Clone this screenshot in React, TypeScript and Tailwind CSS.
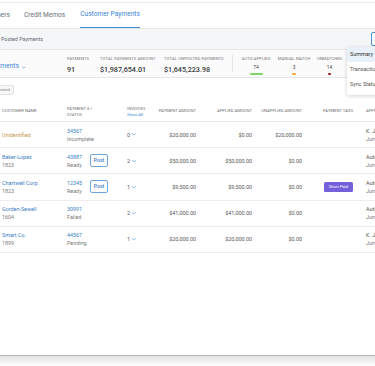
import React from "react";

const Chevron = ({ className = "" }: { className?: string }) => (
  <svg viewBox="0 0 10 6" className={className} fill="none" stroke="currentColor" strokeWidth="1.4" strokeLinecap="round" strokeLinejoin="round">
    <path d="M1 1l4 4 4-4" />
  </svg>
);

type Row = {
  name: string;
  id?: string;
  nameColor: string;
  pay: string;
  status: string;
  post: boolean;
  inv: string;
  amt: string;
  applied: string;
  unapplied: string;
  tag?: string;
  app1: string;
};

const rows: Row[] = [
  { name: "Unidentified", nameColor: "text-[#c9944e]", pay: "34567", status: "Incomplete", post: false, inv: "0", amt: "$20,000.00", applied: "$0.00", unapplied: "$20,000.00", app1: "K. Jo" },
  { name: "Baker-Lopez", id: "1823", nameColor: "text-[#3b7dc4]", pay: "43887", status: "Ready", post: true, inv: "2", amt: "$50,000.00", applied: "$50,000.00", unapplied: "$0.00", app1: "Auto" },
  { name: "Chartwell Corp.", id: "1823", nameColor: "text-[#3b7dc4]", pay: "12345", status: "Ready", post: true, inv: "1", amt: "$9,500.00", applied: "$9,500.00", unapplied: "$0.00", tag: "Short Paid", app1: "Auto" },
  { name: "Gorden-Sewell", id: "1604", nameColor: "text-[#3b7dc4]", pay: "30991", status: "Failed", post: false, inv: "2", amt: "$41,000.00", applied: "$41,000.00", unapplied: "$0.00", app1: "Auto" },
  { name: "Smart Co.", id: "1899", nameColor: "text-[#3b7dc4]", pay: "44567", status: "Pending", post: false, inv: "1", amt: "$20,000.00", applied: "$20,000.00", unapplied: "$0.00", app1: "K. Jo" },
];

export default function App() {
  return (
    <div className="relative w-[375px] h-[366px] overflow-hidden bg-white font-['Roboto',sans-serif] flex flex-col">
      {/* top line */}
      <div className="h-[3px] border-b border-[#ececec] shrink-0" />
      {/* tabs */}
      <div className="h-[26px] shrink-0 border-b border-[#e6e8eb] flex items-stretch text-[6.6px] text-[#6b6f75]">
        <div className="w-[10px] shrink-0 overflow-hidden flex justify-end items-center whitespace-nowrap">
          <span className="shrink-0">Customers</span>
        </div>
        <div className="ml-[14px] shrink-0 flex items-center whitespace-nowrap">Credit Memos</div>
        <div className="ml-[15px] shrink-0 flex flex-col justify-end whitespace-nowrap">
          <div className="flex-1 flex items-center text-[#3d86d6]">Customer Payments</div>
          <div className="h-[1.5px] bg-[#3d86d6]" />
        </div>
      </div>
      {/* sub band */}
      <div className="h-[20px] shrink-0 bg-[#f5f6f8] flex items-center justify-between">
        <span className="pl-[1px] text-[5.4px] text-[#666a70] whitespace-nowrap">Posted Payments</span>
        <div className="w-[14px] h-[14px] shrink-0 -mr-[10px] rounded-[2px] border border-[#4a90d9] bg-white" />
      </div>
      {/* stats band */}
      <div className="h-[29px] shrink-0 bg-[#fbfbfc] border-y border-[#e6e8eb] flex items-stretch">
        <div className="w-[67px] shrink-0 flex items-end pb-[6px]">
          <span className="text-[6.8px] text-[#3d86d6] whitespace-nowrap">ments</span>
          <Chevron className="w-[4px] h-[3px] ml-[3px] mb-[2px] text-[#3d86d6]" />
        </div>
        <div className="w-[33px] shrink-0 flex flex-col pt-[6px]">
          <span className="text-[4.2px] text-[#777] tracking-[0.1px] whitespace-nowrap">PAYMENTS</span>
          <span className="mt-[3px] text-[7.2px] font-medium text-[#3a3a3a]">91</span>
        </div>
        <div className="w-[64px] shrink-0 flex flex-col pt-[6px]">
          <span className="text-[4.2px] text-[#777] tracking-[0.1px] whitespace-nowrap">TOTAL PAYMENTS AMOUNT</span>
          <span className="mt-[3px] text-[7.2px] font-medium text-[#3a3a3a] whitespace-nowrap">$1,987,654.01</span>
        </div>
        <div className="w-[68px] shrink-0 flex flex-col pt-[6px]">
          <span className="text-[4.2px] text-[#777] tracking-[0.1px] whitespace-nowrap">TOTAL UNPOSTED PAYMENTS</span>
          <span className="mt-[3px] text-[7.2px] font-medium text-[#3a3a3a] whitespace-nowrap">$1,645,223.98</span>
        </div>
        <div className="w-px shrink-0 bg-[#e3e5e8] my-[5px]" />
        <div className="w-[38px] shrink-0 ml-[4px] flex flex-col items-center pt-[6px]">
          <span className="text-[4.2px] text-[#777] whitespace-nowrap">AUTO-APPLIED</span>
          <span className="mt-[2px] text-[4.8px] text-[#444]">74</span>
          <span className="mt-[1.5px] w-[13px] h-[2.5px] rounded-full bg-[#7ed66b]" />
        </div>
        <div className="w-[38px] shrink-0 flex flex-col items-center pt-[6px]">
          <span className="text-[4.2px] text-[#777] whitespace-nowrap">MANUAL MATCH</span>
          <span className="mt-[2px] text-[4.8px] text-[#444]">3</span>
          <span className="mt-[1.5px] w-[3.5px] h-[2.5px] rounded-full bg-[#f5a93a]" />
        </div>
        <div className="w-[33px] shrink-0 flex flex-col items-center pt-[6px]">
          <span className="text-[4.2px] text-[#777] whitespace-nowrap">UNMATCHED</span>
          <span className="mt-[2px] text-[4.8px] text-[#444]">14</span>
          <span className="mt-[1.5px] w-[2.5px] h-[2.5px] rounded-full bg-[#8a1c1c]" />
        </div>
      </div>
      {/* chip row */}
      <div className="h-[24px] shrink-0 flex items-center">
        <div className="w-[14px] shrink-0 overflow-hidden flex justify-end">
          <span className="shrink-0 h-[10px] px-[3px] flex items-center rounded-[2px] border border-[#e2e2e2] bg-[#f7f7f7] text-[4.4px] text-[#888] whitespace-nowrap">Posted</span>
        </div>
      </div>
      {/* table header */}
      <div className="h-[20px] shrink-0 border-b border-[#e8e8e8] flex items-center text-[4.2px] text-[#6f6f6f] whitespace-nowrap">
        <div className="w-[67px] shrink-0 pl-[2px]">CUSTOMER NAME</div>
        <div className="w-[60px] shrink-0 leading-[5.5px]">PAYMENT # /<br />STATUS</div>
        <div className="w-[23px] shrink-0 leading-[5.5px]">
          INVOICES<br />
          <span className="text-[#3d86d6]">Show All</span>
        </div>
        <div className="w-[46px] shrink-0 text-right">PAYMENT AMOUNT</div>
        <div className="w-[56px] shrink-0 text-right">APPLIED AMOUNT</div>
        <div className="w-[50px] shrink-0 text-right">UNAPPLIED AMOUNT</div>
        <div className="w-[64px] shrink-0 pl-[21px]">PAYMENT TAGS</div>
        <div className="shrink-0">APPLIED BY</div>
      </div>
      {/* rows */}
      {rows.map((r) => (
        <div key={r.pay} className="h-[26.2px] shrink-0 border-b border-[#ededed] flex items-center text-[5.4px] whitespace-nowrap">
          <div className="w-[67px] shrink-0 pl-[2px] flex flex-col leading-[8px]">
            <span className={r.nameColor}>{r.name}</span>
            {r.id && <span className="text-[#7a7a7a]">{r.id}</span>}
          </div>
          <div className="w-[60px] shrink-0 flex items-center">
            <div className="w-[23px] shrink-0 flex flex-col leading-[8px]">
              <span className="text-[#3b7dc4]">{r.pay}</span>
              <span className="text-[#7a7a7a]">{r.status}</span>
            </div>
            {r.post && (
              <span className="h-[13px] w-[18px] shrink-0 flex items-center justify-center rounded-[2px] border border-[#6ea6de] text-[#3b7dc4] font-medium text-[5.2px]">Post</span>
            )}
          </div>
          <div className="w-[23px] shrink-0 flex items-center text-[#555]">
            <span>{r.inv}</span>
            <Chevron className="w-[4px] h-[2.5px] ml-[2px] text-[#3d86d6]" />
          </div>
          <div className="w-[46px] shrink-0 text-right text-[#555]">{r.amt}</div>
          <div className="w-[56px] shrink-0 text-right text-[#555]">{r.applied}</div>
          <div className="w-[50px] shrink-0 text-right text-[#555]">{r.unapplied}</div>
          <div className="w-[64px] shrink-0 pl-[22px]">
            {r.tag && (
              <span className="inline-flex h-[10px] w-[29px] items-center justify-center rounded-[1.5px] bg-[#7460d8] text-white text-[4.2px]">{r.tag}</span>
            )}
          </div>
          <div className="shrink-0 flex flex-col leading-[8px] text-[#555]">
            <span>{r.app1}</span>
            <span className="text-[#7a7a7a]">Jun 1</span>
          </div>
        </div>
      ))}
      <div className="flex-1" />
      {/* bottom edge */}
      <div className="h-[11px] shrink-0 border-t border-[#b5b5b5] bg-gradient-to-b from-[#e3e3e3] to-white" />
      {/* dropdown overlay */}
      <div className="absolute left-[347px] top-[47px] w-[40px] h-[48px] bg-white shadow-[0_1px_4px_rgba(0,0,0,0.18)] rounded-[2px] flex flex-col text-[5.4px] text-[#555] whitespace-nowrap">
        <div className="h-[15px] bg-[#e8f1fa] flex items-center pl-[3px] text-[#333]">Summary</div>
        <div className="h-[15px] flex items-center pl-[3px]">Transactions</div>
        <div className="h-[15px] flex items-center pl-[3px]">Sync Status</div>
      </div>
    </div>
  );
}
